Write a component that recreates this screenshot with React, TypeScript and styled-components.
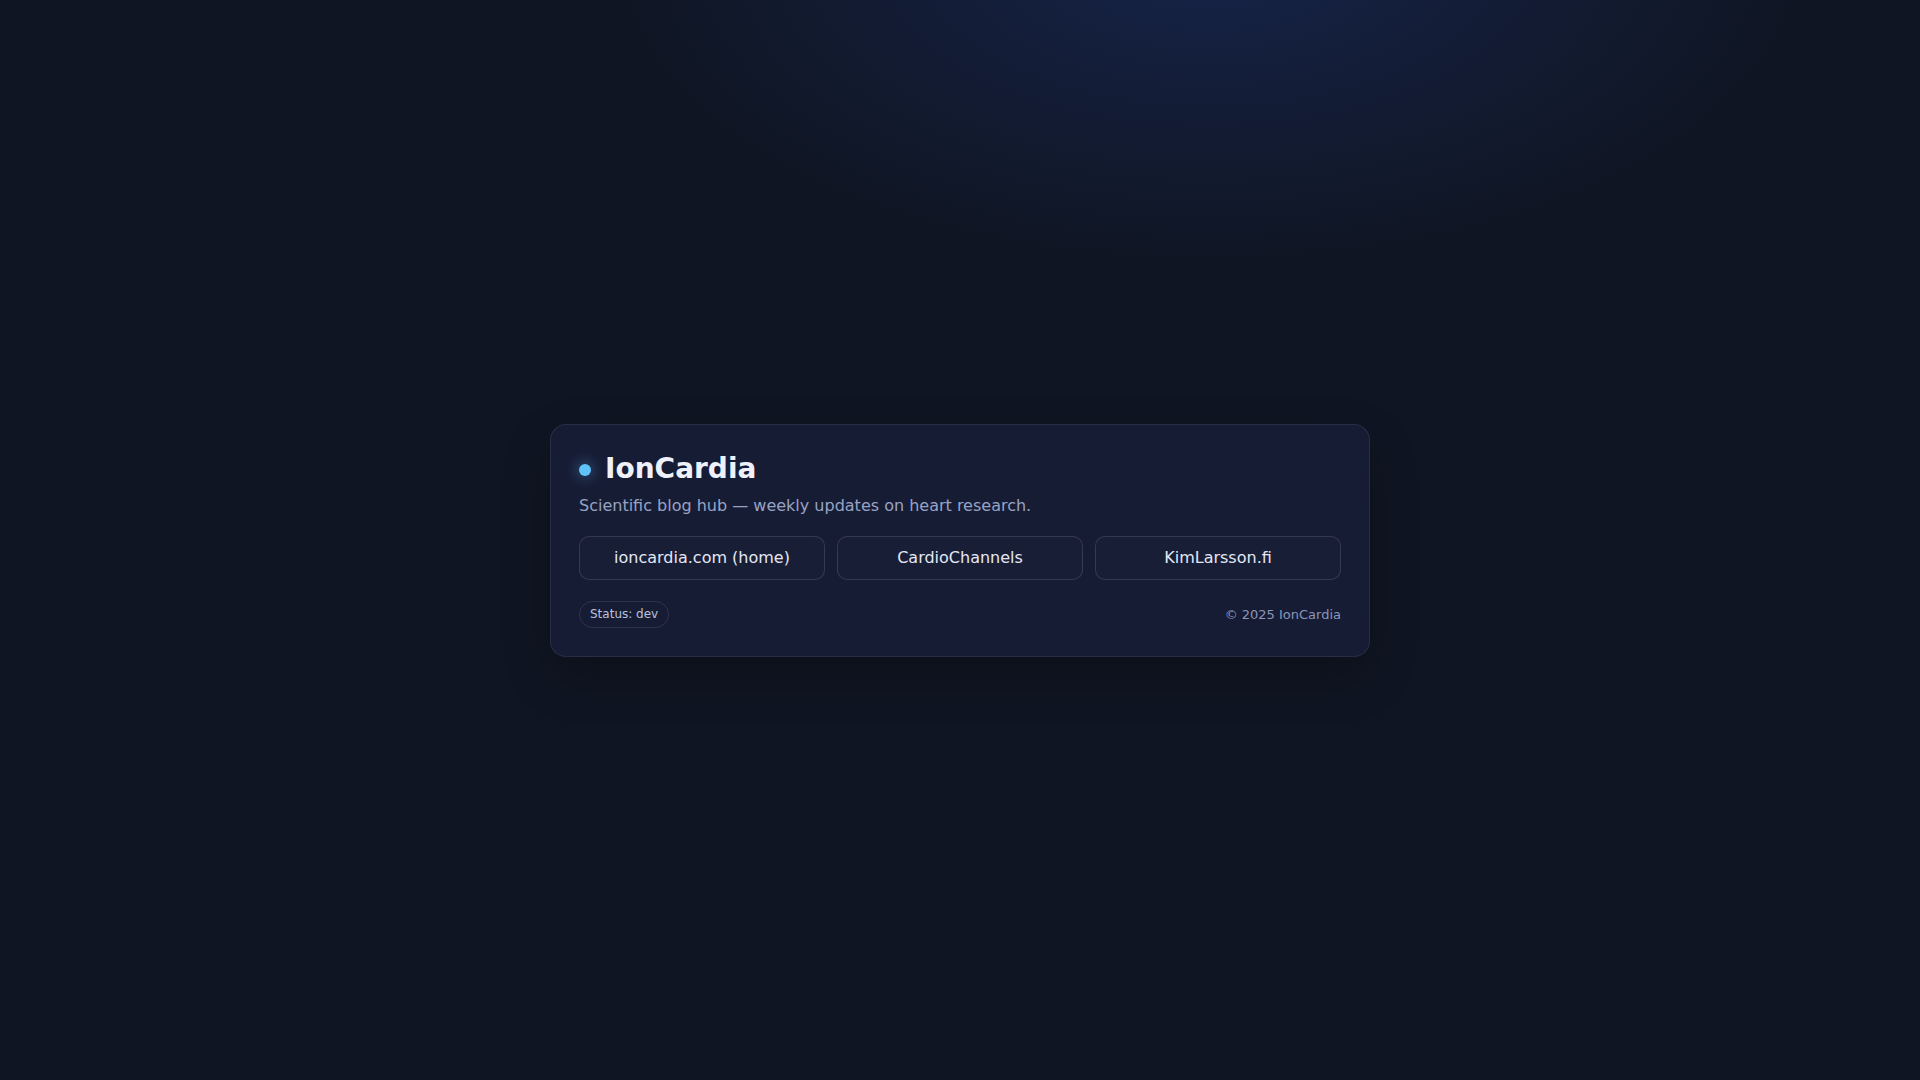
import React from "react";
import styled, { createGlobalStyle } from "styled-components";

const LINKS = [
  { label: "ioncardia.com (home)", href: "#home" },
  { label: "CardioChannels", href: "#channels" },
  { label: "KimLarsson.fi", href: "#kim" },
];

const GlobalStyle = createGlobalStyle`
  html, body {
    margin: 0;
    height: 100%;
  }
  body {
    font-family: "DejaVu Sans", "Noto Sans", sans-serif;
    background:
      radial-gradient(820px 420px at 63% -4%, rgba(30, 50, 110, 0.5), transparent 75%),
      #0f1522;
    color: #e6eaf5;
  }
  #root {
    min-height: 100vh;
  }
`;

const Page = styled.main`
  min-height: 100vh;
  display: flex;
  align-items: center;
  justify-content: center;
`;

const Card = styled.section`
  width: 820px;
  box-sizing: border-box;
  padding: 28px;
  background: #171c35;
  border: 1px solid rgba(255, 255, 255, 0.08);
  border-radius: 16px;
  box-shadow: 0 20px 50px rgba(0, 0, 0, 0.2);
`;

const TitleRow = styled.div`
  display: flex;
  align-items: center;
  gap: 14px;
  height: 32px;
`;

const Dot = styled.span`
  width: 12px;
  height: 12px;
  margin-top: 2px;
  border-radius: 50%;
  background: #5ec4fa;
  box-shadow: 0 0 12px 4px rgba(94, 196, 250, 0.22);
`;

const Title = styled.h1`
  margin: 0;
  font-size: 28px;
  font-weight: 700;
  line-height: 32px;
  color: #eef1fa;
`;

const Subtitle = styled.p`
  margin: 9px 0 18px;
  font-size: 16px;
  line-height: 24px;
  color: #98a3c4;
`;

const LinkGrid = styled.nav`
  display: grid;
  grid-template-columns: repeat(3, 1fr);
  gap: 12px;
`;

const LinkButton = styled.a`
  height: 44px;
  display: flex;
  align-items: center;
  justify-content: center;
  border: 1px solid rgba(255, 255, 255, 0.12);
  border-radius: 10px;
  background: rgba(255, 255, 255, 0.01);
  color: #e3e7f3;
  font-size: 16px;
  text-decoration: none;
  box-sizing: border-box;
`;

const Footer = styled.footer`
  margin-top: 21px;
  display: flex;
  align-items: center;
  justify-content: space-between;
`;

const StatusPill = styled.span`
  padding: 5px 10px;
  border: 1px solid rgba(255, 255, 255, 0.1);
  border-radius: 999px;
  font-size: 12px;
  line-height: 15px;
  color: #b9c2dc;
`;

const Copyright = styled.span`
  font-size: 13px;
  color: #8b96b9;
`;

export default function App() {
  return (
    <>
      <GlobalStyle />
      <Page>
        <Card>
          <TitleRow>
            <Dot />
            <Title>IonCardia</Title>
          </TitleRow>
          <Subtitle>Scientific blog hub — weekly updates on heart research.</Subtitle>
          <LinkGrid>
            {LINKS.map(({ label, href }) => (
              <LinkButton key={label} href={href}>
                {label}
              </LinkButton>
            ))}
          </LinkGrid>
          <Footer>
            <StatusPill>Status: dev</StatusPill>
            <Copyright>© 2025 IonCardia</Copyright>
          </Footer>
        </Card>
      </Page>
    </>
  );
}
